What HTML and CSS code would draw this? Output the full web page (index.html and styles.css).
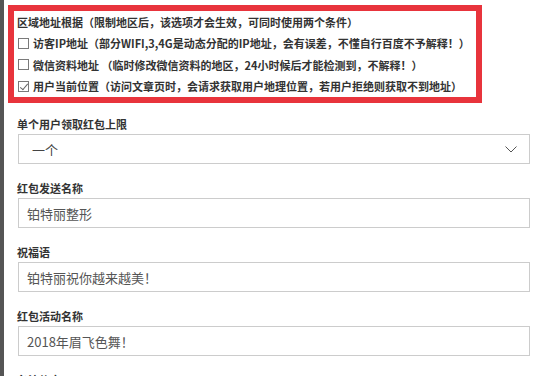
FILE: index.html
```html
<!DOCTYPE html>
<html lang="zh-CN">
<head>
    <meta charset="UTF-8">
    <meta name="viewport" content="width=device-width, initial-scale=1.0">
    <title>红包设置</title>
    <link rel="stylesheet" href="styles.css">
</head>
<body>
    <div class="page">
        <div class="gutter"></div>

        <form class="form">
            <div class="notice">
                <p class="notice-title">区域地址根据（限制地区后，该选项才会生效，可同时使用两个条件）</p>
                <label class="option">
                    <input type="checkbox" class="check">
                    <span>访客IP地址（部分WIFI,3,4G是动态分配的IP地址，会有误差，不懂自行百度不予解释！）</span>
                </label>
                <label class="option">
                    <input type="checkbox" class="check">
                    <span>微信资料地址 （临时修改微信资料的地区，24小时候后才能检测到，不解释！）</span>
                </label>
                <label class="option">
                    <input type="checkbox" class="check" checked>
                    <span>用户当前位置（访问文章页时，会请求获取用户地理位置，若用户拒绝则获取不到地址）</span>
                </label>
            </div>

            <div class="field">
                <label class="field-label">单个用户领取红包上限</label>
                <div class="select-wrap">
                    <select class="select">
                        <option>一个</option>
                        <option>两个</option>
                        <option>三个</option>
                    </select>
                    <svg class="chevron" width="12" height="7" viewBox="0 0 12 7">
                        <path d="M0.5 0.5 L6 6 L11.5 0.5" fill="none" stroke="#555" stroke-width="1"/>
                    </svg>
                </div>
            </div>

            <div class="field">
                <label class="field-label">红包发送名称</label>
                <input class="input" type="text" value="铂特丽整形">
            </div>

            <div class="field">
                <label class="field-label">祝福语</label>
                <input class="input" type="text" value="铂特丽祝你越来越美！">
            </div>

            <div class="field">
                <label class="field-label">红包活动名称</label>
                <input class="input" type="text" value="2018年眉飞色舞！">
            </div>

            <div class="field">
                <label class="field-label">备注信息</label>
                <input class="input" type="text" value="">
            </div>
        </form>
    </div>
</body>
</html>
```

FILE: styles.css
```css
* {
    margin: 0;
    padding: 0;
    box-sizing: border-box;
    font-family: "Noto Sans CJK SC", "Noto Sans", sans-serif;
}

body {
    background: white;
    color: #333;
}

.page {
    display: flex;
    min-height: 100vh;
}

.gutter {
    width: 4px;
    flex-shrink: 0;
    background: #555;
}

.form {
    flex: 1;
    padding: 5px 14px 0 4px;
}

/* red box with the region options */
.notice {
    width: 474px;
    border: 6px solid #e8343c;
    padding: 0 4px;
}

.notice-title,
.option {
    display: flex;
    align-items: center;
    height: 21.5px;
    font-size: 11px;
    font-weight: 700;
    color: #333;
    white-space: nowrap;
}

.notice-title {
    margin-left: -1px;
}

.option {
    gap: 4px;
}

.check {
    appearance: none;
    width: 11px;
    height: 11px;
    border: 1px solid #7a7a7a;
    background: white;
    position: relative;
    flex-shrink: 0;
}

.check:checked::after {
    content: "";
    position: absolute;
    left: 3px;
    top: 0;
    width: 3px;
    height: 7px;
    border-right: 1px solid #666;
    border-bottom: 1px solid #666;
    transform: rotate(40deg);
}

.field {
    margin-left: 10px;
    margin-top: 11px;
}

.field + .field {
    margin-top: 14px;
}

.field-label {
    display: block;
    height: 20px;
    line-height: 20px;
    font-size: 11px;
    font-weight: 700;
    color: #333;
    margin-left: -1px;
}

.select-wrap {
    position: relative;
}

.select {
    appearance: none;
    width: 100%;
    height: 30px;
    border: 1px solid #ccc;
    border-radius: 0;
    background: white;
    padding: 0 13px;
    font-size: 13px;
    color: #444;
}

.chevron {
    position: absolute;
    right: 13px;
    top: 12px;
    pointer-events: none;
}

.input {
    display: block;
    width: 100%;
    height: 30px;
    border: 1px solid #ccc;
    padding: 0 8px;
    font-size: 13px;
    color: #555;
    outline: none;
}
```
